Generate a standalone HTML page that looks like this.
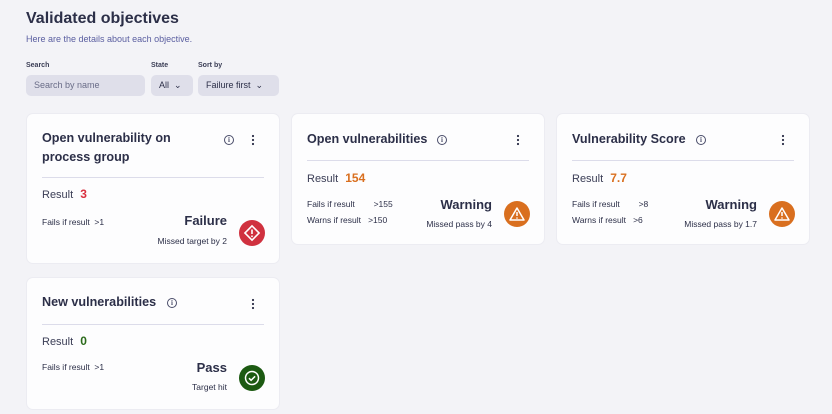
<!DOCTYPE html>
<html><head><style>
*{box-sizing:border-box;margin:0;padding:0}
body{width:832px;height:414px;background:#f3f3f7;font-family:"Liberation Sans",sans-serif;color:#2c2f48;position:relative;overflow:hidden}
.a{position:absolute}
h1{position:absolute;left:26px;top:10px;font-size:16px;font-weight:bold;color:#2c2f48}
.sub{left:26px;top:34px;font-size:9px;color:#5a5ea0}
.lbl{font-size:7px;font-weight:bold;color:#3a3d55}
.inp{background:#dfdfea;border-radius:5px;height:21px;font-size:9px;line-height:21px;padding-left:8px;color:#6a6d88}
.card{position:absolute;background:#fdfdfe;border-radius:7px;border:1px solid #ececf2}
.t{position:absolute;left:15px;font-size:12.6px;font-weight:bold;color:#2c2f48;line-height:19px}
.hr{position:absolute;left:15px;right:15px;height:1px;background:#dcdcea}
.res{position:absolute;left:15px;font-size:11px;color:#3a3d55}
.res b{font-size:12px;margin-left:4px}
.sm{position:absolute;font-size:8.5px;color:#2c2f48;white-space:pre}
.st{position:absolute;font-size:13px;font-weight:bold;text-align:right}
.ic{position:absolute;width:26px;height:26px;border-radius:50%}
.dots{position:absolute;width:4px;height:12px}
.info{position:absolute;width:10px;height:10px;border:1px solid #4a4d6a;border-radius:50%;font-size:7px;text-align:center;line-height:8px;color:#4a4d6a;font-family:"Liberation Serif",serif;font-weight:bold}
</style></head><body>
<h1>Validated objectives</h1>
<div class="a sub">Here are the details about each objective.</div>
<div class="a lbl" style="left:26px;top:62px">Search</div>
<div class="a lbl" style="left:151px;top:62px">State</div>
<div class="a lbl" style="left:198px;top:62px">Sort by</div>
<div class="a inp" style="left:26px;top:75px;width:119px">Search by name</div>
<div class="a inp" style="left:151px;top:75px;width:42px;color:#2c2f48">All &nbsp;⌄</div>
<div class="a inp" style="left:198px;top:75px;width:81px;color:#2c2f48">Failure first &nbsp;⌄</div>

<div class="card" style="left:26px;top:113px;width:254px;height:151px">
<div class="t" style="top:15px">Open vulnerability on<br>process group</div>
<div class="info" style="left:197px;top:21px">i</div>
<svg class="dots" style="left:224px;top:20px" viewBox="0 0 4 12"><circle cx="2" cy="2" r="1.1" fill="#2c2f48"/><circle cx="2" cy="6" r="1.1" fill="#2c2f48"/><circle cx="2" cy="10" r="1.1" fill="#2c2f48"/></svg>
<div class="hr" style="top:63px"></div>
<div class="res" style="top:73px">Result <b style="color:#d9303f">3</b></div>
<div class="sm" style="left:15px;top:103px">Fails if result  &gt;1</div>
<div class="st" style="right:52px;top:99px">Failure</div>
<div class="sm" style="right:52px;top:122px">Missed target by 2</div>
<div class="ic" style="left:212px;top:106px;background:#d0313f"><svg width="26" height="26" viewBox="0 0 26 26"><rect x="8" y="8" width="10" height="10" transform="rotate(45 13 13)" fill="none" stroke="#fff" stroke-width="1.6"/><line x1="13" y1="9.5" x2="13" y2="14" stroke="#fff" stroke-width="1.6"/><circle cx="13" cy="16.3" r=".9" fill="#fff"/></svg></div>
</div>

<div class="card" style="left:291px;top:113px;width:254px;height:132px">
<div class="t" style="top:16px">Open vulnerabilities</div>
<div class="info" style="left:145px;top:21px">i</div>
<svg class="dots" style="left:224px;top:20px" viewBox="0 0 4 12"><circle cx="2" cy="2" r="1.1" fill="#2c2f48"/><circle cx="2" cy="6" r="1.1" fill="#2c2f48"/><circle cx="2" cy="10" r="1.1" fill="#2c2f48"/></svg>
<div class="hr" style="top:46px"></div>
<div class="res" style="top:57px">Result <b style="color:#d96f1f">154</b></div>
<div class="sm" style="left:15px;top:85px">Fails if result        &gt;155</div>
<div class="sm" style="left:15px;top:101px">Warns if result   &gt;150</div>
<div class="st" style="right:52px;top:83px">Warning</div>
<div class="sm" style="right:52px;top:105px">Missed pass by 4</div>
<div class="ic" style="left:212px;top:87px;background:#d96f1f"><svg width="26" height="26" viewBox="0 0 26 26"><path d="M13 7L20 19H6Z" fill="none" stroke="#fff" stroke-width="1.5" stroke-linejoin="round"/><line x1="13" y1="11" x2="13" y2="15" stroke="#fff" stroke-width="1.5"/><circle cx="13" cy="17" r=".8" fill="#fff"/></svg></div>
</div>

<div class="card" style="left:556px;top:113px;width:254px;height:132px">
<div class="t" style="top:16px">Vulnerability Score</div>
<div class="info" style="left:139px;top:21px">i</div>
<svg class="dots" style="left:224px;top:20px" viewBox="0 0 4 12"><circle cx="2" cy="2" r="1.1" fill="#2c2f48"/><circle cx="2" cy="6" r="1.1" fill="#2c2f48"/><circle cx="2" cy="10" r="1.1" fill="#2c2f48"/></svg>
<div class="hr" style="top:46px"></div>
<div class="res" style="top:57px">Result <b style="color:#d96f1f">7.7</b></div>
<div class="sm" style="left:15px;top:85px">Fails if result        &gt;8</div>
<div class="sm" style="left:15px;top:101px">Warns if result   &gt;6</div>
<div class="st" style="right:52px;top:83px">Warning</div>
<div class="sm" style="right:52px;top:105px">Missed pass by 1.7</div>
<div class="ic" style="left:212px;top:87px;background:#d96f1f"><svg width="26" height="26" viewBox="0 0 26 26"><path d="M13 7L20 19H6Z" fill="none" stroke="#fff" stroke-width="1.5" stroke-linejoin="round"/><line x1="13" y1="11" x2="13" y2="15" stroke="#fff" stroke-width="1.5"/><circle cx="13" cy="17" r=".8" fill="#fff"/></svg></div>
</div>

<div class="card" style="left:26px;top:277px;width:254px;height:133px">
<div class="t" style="top:15px">New vulnerabilities</div>
<div class="info" style="left:140px;top:20px">i</div>
<svg class="dots" style="left:224px;top:20px" viewBox="0 0 4 12"><circle cx="2" cy="2" r="1.1" fill="#2c2f48"/><circle cx="2" cy="6" r="1.1" fill="#2c2f48"/><circle cx="2" cy="10" r="1.1" fill="#2c2f48"/></svg>
<div class="hr" style="top:46px"></div>
<div class="res" style="top:56px">Result <b style="color:#2a6a1a">0</b></div>
<div class="sm" style="left:15px;top:84px">Fails if result  &gt;1</div>
<div class="st" style="right:52px;top:82px">Pass</div>
<div class="sm" style="right:52px;top:104px">Target hit</div>
<div class="ic" style="left:212px;top:87px;background:#1c5a12"><svg width="26" height="26" viewBox="0 0 26 26"><circle cx="13" cy="13" r="6.5" fill="none" stroke="#fff" stroke-width="1.5"/><path d="M10 13.2l2.1 2.1 4-4" fill="none" stroke="#fff" stroke-width="1.5"/></svg></div>
</div>
</body></html>
